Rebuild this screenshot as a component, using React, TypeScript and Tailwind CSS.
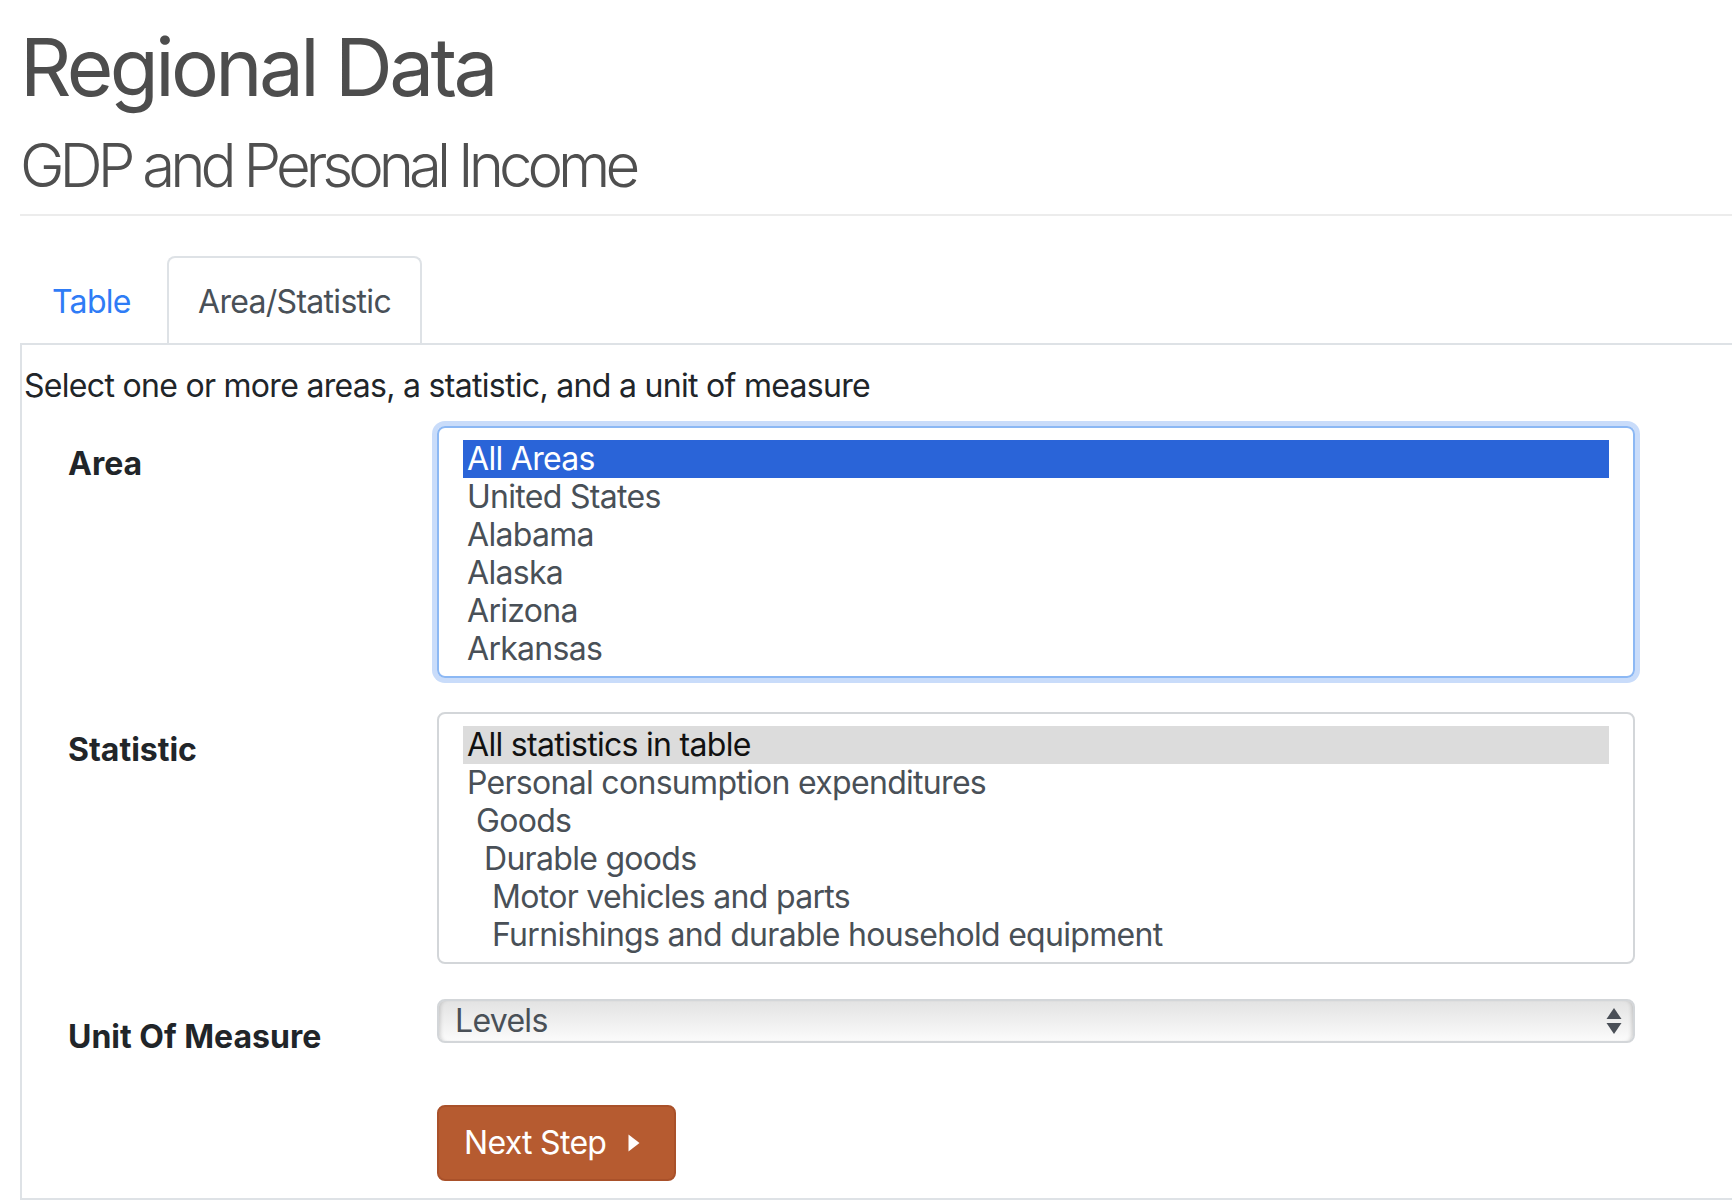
import React from "react";

const areas = ["All Areas", "United States", "Alabama", "Alaska", "Arizona", "Arkansas"];

const stats: { t: string; pad: string }[] = [
  { t: "All statistics in table", pad: "pl-[4px]" },
  { t: "Personal consumption expenditures", pad: "pl-[4px]" },
  { t: "Goods", pad: "pl-[13px]" },
  { t: "Durable goods", pad: "pl-[21px]" },
  { t: "Motor vehicles and parts", pad: "pl-[29px]" },
  { t: "Furnishings and durable household equipment", pad: "pl-[29px]" },
];

function Label({ children }: { children: React.ReactNode }) {
  return (
    <div className="w-[413px] shrink-0 pl-[44px] pt-[14px] text-[32px] leading-[48px] font-bold text-[#212529]">
      {children}
    </div>
  );
}

export default function App() {
  return (
    <div className="w-[1732px] h-[1200px] overflow-hidden bg-white font-['Inter',sans-serif]">
      <div className="pl-[20px]">
        <h1 className="pt-[19px] text-[80px] leading-[96px] font-normal tracking-[-3.6px] text-[#4d4d4d]">
          Regional Data
        </h1>
        <h2 className="mt-[12px] text-[60px] leading-[76px] font-light tracking-[-5px] text-[#4f4f4f]">
          GDP and Personal Income
        </h2>
        <div className="mt-[11px] h-[2px] bg-[#ececec]" />

        <div className="mt-[40px] flex h-[87px] text-[32px] leading-[48px] tracking-[-0.7px]">
          <div className="w-[147px] pl-[32px] pt-[22px] text-[#2f7cf6]">Table</div>
          <div className="w-[255px] border-2 border-b-0 border-[#dee2e6] rounded-t-[8px] bg-white flex justify-center pt-[20px] text-[#495057]">
            Area/Statistic
          </div>
        </div>

        <div className="h-[857px] border-2 border-r-0 border-[#dee2e6] pl-[2px] pt-[17px]">
          <p className="text-[32px] leading-[48px] tracking-[-0.7px] text-[#212529]">
            Select one or more areas, a statistic, and a unit of measure
          </p>

          <div className="mt-[16px] flex">
            <Label>Area</Label>
            <div className="w-[1198px] h-[252px] border-2 border-[#8cb8f4] rounded-[8px] shadow-[0_0_0_5px_#c9dcfa] pt-[12px] px-[24px]">
              {areas.map((a, i) => (
                <div
                  key={a}
                  className={
                    "h-[38px] px-[4px] text-[32px] leading-[38px] tracking-[-0.7px] " +
                    (i === 0 ? "bg-[#2a64d8] text-white" : "text-[#495057]")
                  }
                >
                  {a}
                </div>
              ))}
            </div>
          </div>

          <div className="mt-[34px] flex">
            <Label>Statistic</Label>
            <div className="w-[1198px] h-[252px] border-2 border-[#d3d6d9] rounded-[8px] pt-[12px] px-[24px]">
              {stats.map((s, i) => (
                <div
                  key={s.t}
                  className={
                    "h-[38px] pr-[4px] text-[32px] leading-[38px] tracking-[-0.7px] whitespace-nowrap " +
                    s.pad +
                    " " +
                    (i === 0 ? "bg-[#dcdcdc] text-[#111111]" : "text-[#495057]")
                  }
                >
                  {s.t}
                </div>
              ))}
            </div>
          </div>

          <div className="mt-[35px] flex items-start">
            <Label>Unit Of Measure</Label>
            <div className="w-[1198px] h-[44px] border-2 border-[#d3d6d9] rounded-[8px] bg-gradient-to-b from-[#e3e3e3] to-[#fbfbfb] shadow-[inset_4px_0_4px_-3px_rgba(0,0,0,0.18),inset_-4px_0_4px_-3px_rgba(0,0,0,0.18)] flex items-center justify-between pl-[16px] pr-[11px]">
              <span className="text-[32px] leading-[40px] tracking-[-0.7px] text-[#495057]">Levels</span>
              <svg width="16" height="28" viewBox="0 0 16 28" className="block">
                <polygon points="8,1 15.5,12 0.5,12" fill="#4a4f57" />
                <polygon points="0.5,16 15.5,16 8,27" fill="#4a4f57" />
              </svg>
            </div>
          </div>

          <div className="mt-[44px] flex">
            <div className="w-[413px] shrink-0" />
            <button className="w-[239px] h-[76px] border-2 border-[#a9512a] rounded-[8px] bg-[#b65b30] flex items-center pl-[25px] text-[32px] leading-[48px] tracking-[-0.7px] text-white">
              <span>Next Step</span>
              <svg width="12" height="18" viewBox="0 0 12 18" className="ml-[22px] block">
                <polygon points="0.5,0.5 11.5,9 0.5,17.5" fill="#ffffff" />
              </svg>
            </button>
          </div>
        </div>
      </div>
    </div>
  );
}
